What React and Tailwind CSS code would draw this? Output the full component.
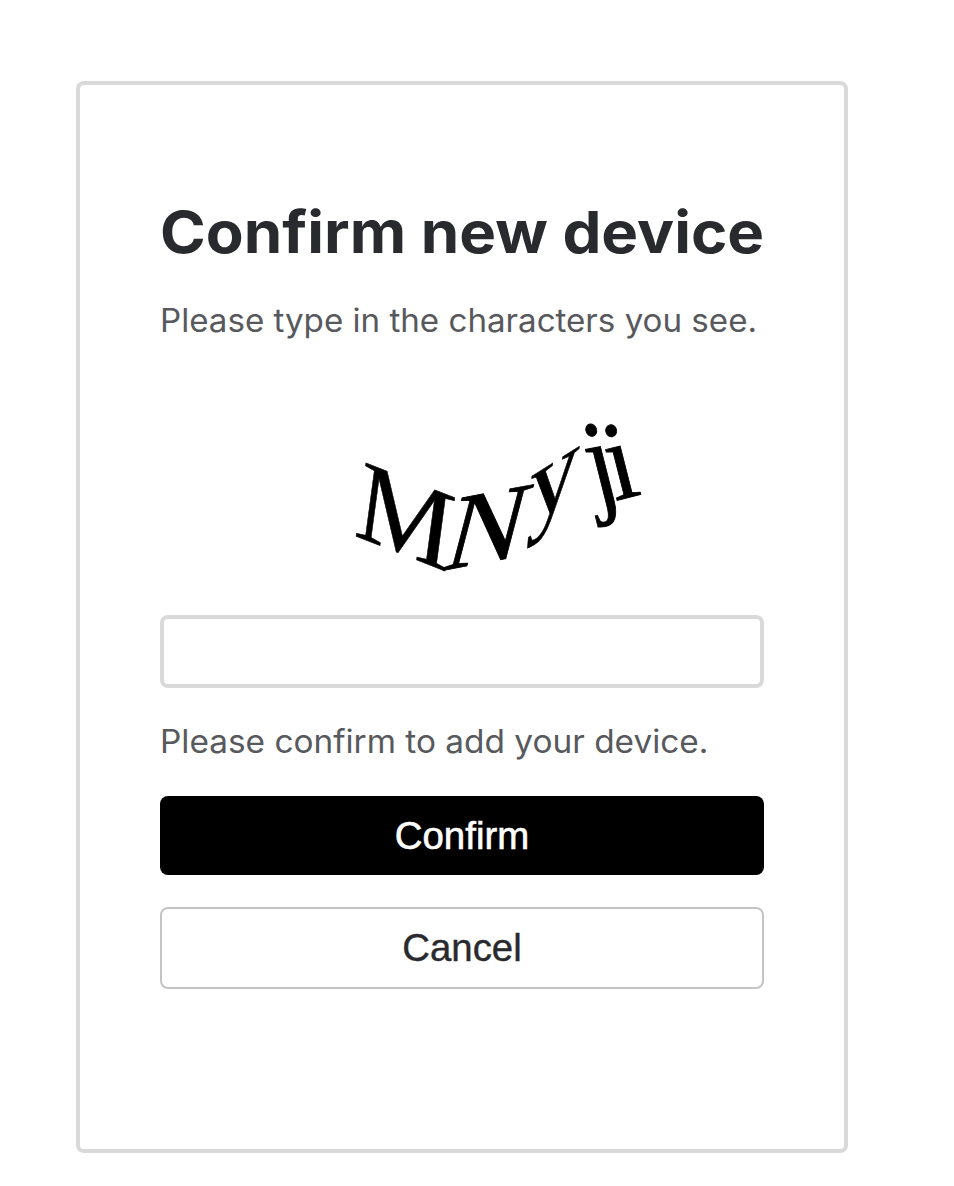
import React from "react";

const glyphs = [
  { char: "M", matrix: "matrix(1.07 .42 -.15 1.12 193 146)", weight: 0.5 },
  { char: "N", matrix: "matrix(1.07 -.2 -.29 1.11 280 182)", weight: 0.8 },
  { char: "y", matrix: "matrix(.98 -.62 -.08 1.09 367 138)", weight: 0.6 },
  { char: "j", matrix: "matrix(1 -.2 .29 1.15 435 114)", weight: 0.8 },
  { char: "i", matrix: "matrix(1 -.25 .28 1.1 455 112)", weight: 0.8 },
];

function Challenge() {
  return (
    <svg
      viewBox="0 0 604 208"
      className="block h-[208px] w-[604px] font-['Liberation_Serif',serif] text-[100px]"
      fill="#000"
      stroke="#000"
      role="img"
    >
      {glyphs.map(({ char, matrix, weight }) => (
        <text key={char} transform={matrix} strokeWidth={weight}>
          {char}
        </text>
      ))}
    </svg>
  );
}

export default function App() {
  return (
    <main className="flex h-[1186px] w-[954px] items-start bg-white pt-[81px] pl-[76px] font-['Inter',sans-serif]">
      <form
        className="flex h-[1072px] w-[772px] flex-col rounded-lg border-4 border-[#d9d9d9] px-20 pt-[112px]"
        onSubmit={(e) => e.preventDefault()}
      >
        <h1 className="h-[72px] origin-left scale-x-[1.066] text-[58px] leading-[70px] font-bold whitespace-nowrap text-[#292a2e]">
          Confirm new device
        </h1>
        <p className="mt-[32px] h-10 origin-left scale-x-[1.035] text-[32px] leading-10 whitespace-nowrap text-[#58595d]">
          Please type in the characters you see.
        </p>
        <div className="mt-[48px] h-[226px]">
          <Challenge />
        </div>
        <input
          type="text"
          className="h-[73px] w-full shrink-0 rounded-lg border-4 border-[#d9d9d9] bg-white px-4 text-[32px] outline-none"
        />
        <p className="mt-[34px] h-10 origin-left scale-x-[1.043] text-[32px] leading-10 whitespace-nowrap text-[#58595d]">
          Please confirm to add your device.
        </p>
        <button
          type="submit"
          className="mt-[34px] h-[79px] w-full shrink-0 rounded-lg bg-black font-['Liberation_Sans',sans-serif] text-[38.4px] text-white [-webkit-text-stroke:0.6px]"
        >
          Confirm
        </button>
        <button
          type="button"
          className="mt-8 h-[82px] w-full shrink-0 rounded-lg border-2 border-[#c4c4c4] bg-white font-['Liberation_Sans',sans-serif] text-[38.4px] text-[#292a2e] [-webkit-text-stroke:0.4px]"
        >
          Cancel
        </button>
      </form>
    </main>
  );
}
